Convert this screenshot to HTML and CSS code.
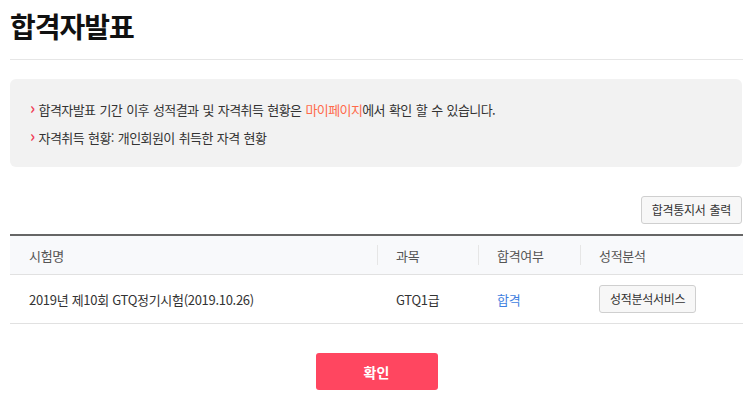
FILE: index.html
```html
<!DOCTYPE html>
<html lang="ko">
<head>
<meta charset="utf-8">
<link rel="stylesheet" href="styles.css">
</head>
<body>
<div class="page">
  <h1 class="title">합격자발표</h1>
  <div class="info">
    <p class="info-line"><span class="chev">›</span>합격자발표 기간 이후 성적결과 및 자격취득 현황은 <span class="hl">마이페이지</span>에서 확인 할 수 있습니다.</p>
    <p class="info-line"><span class="chev">›</span>자격취득 현황: 개인회원이 취득한 자격 현황</p>
  </div>
  <div class="tools">
    <button class="btn btn-print">합격통지서 출력</button>
  </div>
  <div class="table">
    <div class="row head">
      <div class="cell c1">시험명</div>
      <div class="cell c2 sep">과목</div>
      <div class="cell c3 sep">합격여부</div>
      <div class="cell c4 sep">성적분석</div>
    </div>
    <div class="row body">
      <div class="cell c1">2019년 제10회 GTQ정기시험(2019.10.26)</div>
      <div class="cell c2">GTQ1급</div>
      <div class="cell c3 pass">합격</div>
      <div class="cell c4"><button class="btn btn-svc">성적분석서비스</button></div>
    </div>
  </div>
  <div class="actions">
    <button class="confirm">확인</button>
  </div>
</div>
</body>
</html>
```
FILE: styles.css
```css
* { box-sizing: border-box; }
html, body { margin: 0; padding: 0; background: #fff; }
body {
  font-family: "Noto Sans CJK KR", "Noto Sans", sans-serif;
  font-size: 13px;
  color: #333;
  letter-spacing: -0.3px;
}
.page { padding-left: 10px; width: 743px; }
.title {
  margin: 0;
  padding: 5px 0 12px;
  font-size: 28px;
  line-height: 42px;
  font-weight: 700;
  color: #111;
  border-bottom: 1px solid #e6e6e6;
  letter-spacing: -1px;
}
.info {
  margin-top: 19px;
  width: 732px;
  background: #f2f2f2;
  border-radius: 6px;
  padding: 16px 20px 16px 20px;
}
.info-line {
  margin: 0;
  line-height: 27px;
  font-size: 13px;
  color: #333;
  letter-spacing: -0.6px;
  word-spacing: 1px;
}
.chev {
  color: #f0405a;
  font-weight: 700;
  font-size: 16px;
  margin-right: 4px;
  display: inline-block;
  transform: translateY(-1px);
}
.hl { color: #ff6a4a; }
.tools {
  display: flex;
  justify-content: flex-end;
  width: 732px;
  margin-top: 29px;
}
.btn {
  font-family: inherit;
  font-size: 12px;
  letter-spacing: -0.3px;
  color: #333;
  background: #f7f7f7;
  border: 1px solid #cfcfcf;
  border-radius: 3px;
  height: 28px;
  padding: 0 8px;
  line-height: 26px;
}
.btn-print { padding: 0 10px; word-spacing: 1px; }
.btn-svc { padding: 0 10px; }
.table {
  margin-top: 10px;
  width: 733px;
  border-top: 2px solid #666;
}
.row { display: flex; align-items: center; }
.row.head {
  height: 39px;
  background: #f8f9fb;
  border-bottom: 1px solid #e1e1e1;
  color: #555;
}
.row.body {
  height: 49px;
  border-bottom: 1px solid #e1e1e1;
}
.cell {
  padding-left: 19px;
  position: relative;
  height: 100%;
  display: flex;
  align-items: center;
}
.c1 { width: 367px; }
.c2 { width: 101px; }
.c3 { width: 102px; }
.c4 { width: 163px; }
.sep::before {
  content: "";
  position: absolute;
  left: 0;
  top: 9px;
  bottom: 9px;
  width: 1px;
  background: #e6e6e6;
}
.pass { color: #3f7fe0; }
.actions {
  display: flex;
  justify-content: center;
  width: 733px;
  margin-top: 29px;
}
.confirm {
  font-family: inherit;
  width: 122px;
  height: 37px;
  background: #ff4660;
  color: #fff;
  border: 0;
  border-radius: 3px;
  font-size: 14px;
  font-weight: 700;
}
```
